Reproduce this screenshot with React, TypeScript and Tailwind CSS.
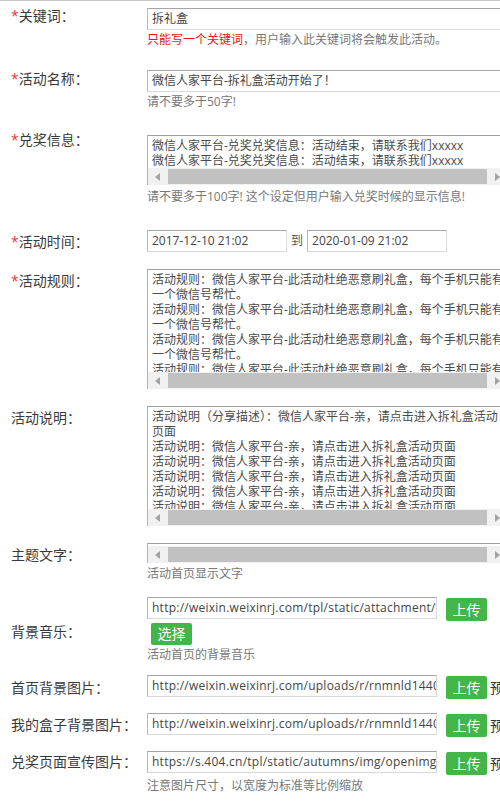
import React from "react";

function Label({ text, req, cls }: { text: string; req?: boolean; cls: string }) {
  return (
    <div className={`w-[147px] shrink-0 pl-[11px] text-[14px] leading-[16px] text-[#3a3a3a] whitespace-nowrap ${cls}`}>
      {req && <span className="text-[#e4393c]">*</span>}
      {text}
    </div>
  );
}

function TextInput({ value, w, url }: { value: string; w: string; url?: boolean }) {
  return (
    <div
      className={`h-[22px] ${w} shrink-0 border border-[#d9d9d9] border-t-[#a5a5a5] border-l-[#b9b9b9] bg-white px-[4px] text-[12px] leading-[20px] text-[#444] whitespace-nowrap overflow-hidden ${url ? "tracking-[0.25px]" : ""}`}
    >
      {value}
    </div>
  );
}

function Arrow({ dir }: { dir: "l" | "r" }) {
  return (
    <svg width="5" height="8" viewBox="0 0 5 8">
      {dir === "l" ? <path d="M5 0 L0 4 L5 8 Z" fill="#a3a3a3" /> : <path d="M0 0 L5 4 L0 8 Z" fill="#a3a3a3" />}
    </svg>
  );
}

function HScroll() {
  return (
    <div className="flex h-[17px] bg-[#f1f1f1]">
      <div className="w-[18px] h-[17px] flex items-center justify-center">
        <Arrow dir="l" />
      </div>
      <div className="ml-[2px] mt-[1px] w-[319px] h-[15px] bg-[#c1c1c1]" />
      <div className="ml-[2px] w-[17px] h-[17px] flex items-center justify-center">
        <Arrow dir="r" />
      </div>
    </div>
  );
}

function Area({ lines, h }: { lines: string[]; h: string }) {
  return (
    <div className="w-[360px] border-t border-l border-t-[#a0a0a0] border-l-[#b4b4b4] bg-white">
      <div className={`${h} overflow-hidden px-[4px] pt-[2px] text-[12px] leading-[15px] text-[#4a4a4a] whitespace-pre`}>
        {lines.join("\n")}
      </div>
      <HScroll />
    </div>
  );
}

function Hint({ children, cls }: { children: React.ReactNode; cls: string }) {
  return <div className={`${cls} text-[12px] leading-[16px] text-[#777] whitespace-nowrap`}>{children}</div>;
}

function UploadBtn() {
  return (
    <div className="ml-[9px] mt-[1px] w-[41px] h-[23px] shrink-0 rounded-[2px] bg-[#44b549] text-center text-[14px] leading-[23px] text-white">
      上传
    </div>
  );
}

function Preview() {
  return <div className="ml-[3px] mt-[1px] text-[14px] leading-[24px] text-[#333] whitespace-nowrap">预览</div>;
}

export default function App() {
  const rule = "活动规则：微信人家平台-此活动杜绝恶意刷礼盒，每个手机只能有";
  const rule2 = "一个微信号帮忙。";
  const desc = "活动说明：微信人家平台-亲，请点击进入拆礼盒活动页面";
  return (
    <div className="w-[500px] h-[801px] overflow-hidden bg-white border-t border-[#c9c9c9] pt-[7px] font-['Open_Sans','Noto_Sans_CJK_SC',sans-serif]">
      {/* 关键词 */}
      <div className="flex h-[62px]">
        <Label req text="关键词：" cls="mt-[0px]" />
        <div className="flex flex-col">
          <TextInput value="拆礼盒" w="w-[400px]" />
          <Hint cls="mt-[2px]">
            <span className="text-[#ee1111]">只能写一个关键词</span>，用户输入此关键词将会触发此活动。
          </Hint>
        </div>
      </div>
      {/* 活动名称 */}
      <div className="flex h-[65px]">
        <Label req text="活动名称：" cls="mt-[1px]" />
        <div className="flex flex-col">
          <TextInput value="微信人家平台-拆礼盒活动开始了！" w="w-[400px]" />
          <Hint cls="mt-[2px]">请不要多于50字!</Hint>
        </div>
      </div>
      {/* 兑奖信息 */}
      <div className="flex h-[95px]">
        <Label req text="兑奖信息：" cls="-mt-[3px]" />
        <div className="flex flex-col">
          <Area
            h="h-[32px]"
            lines={[
              "微信人家平台-兑奖兑奖信息：活动结束，请联系我们xxxxx",
              "微信人家平台-兑奖兑奖信息：活动结束，请联系我们xxxxx",
            ]}
          />
          <Hint cls="mt-[4px]">请不要多于100字! 这个设定但用户输入兑奖时候的显示信息!</Hint>
        </div>
      </div>
      {/* 活动时间 */}
      <div className="flex h-[39px]">
        <Label req text="活动时间：" cls="mt-[4px]" />
        <div className="flex">
          <TextInput value="2017-12-10 21:02" w="w-[140px]" />
          <div className="ml-[4px] mr-[4px] text-[12px] leading-[22px] text-[#555]">到</div>
          <TextInput value="2020-01-09 21:02" w="w-[140px]" />
        </div>
      </div>
      {/* 活动规则 */}
      <div className="flex h-[137px]">
        <Label req text="活动规则：" cls="mt-[4px]" />
        <div className="flex flex-col">
          <Area h="h-[102px]" lines={[rule, rule2, rule, rule2, rule, rule2, rule]} />
        </div>
      </div>
      {/* 活动说明 */}
      <div className="flex h-[137px]">
        <Label text="活动说明：" cls="mt-[4px]" />
        <div className="flex flex-col">
          <Area
            h="h-[102px]"
            lines={["活动说明（分享描述）：微信人家平台-亲，请点击进入拆礼盒活动", "页面", desc, desc, desc, desc, desc]}
          />
        </div>
      </div>
      {/* 主题文字 */}
      <div className="flex h-[54px]">
        <Label text="主题文字：" cls="mt-[4px]" />
        <div className="flex flex-col">
          <div className="w-[360px] border-t border-l border-t-[#a0a0a0] border-l-[#b4b4b4] bg-white">
            <div className="h-[2px]" />
            <HScroll />
          </div>
          <Hint cls="mt-[3px]">活动首页显示文字</Hint>
        </div>
      </div>
      {/* 背景音乐 */}
      <div className="flex h-[78px]">
        <Label text="背景音乐：" cls="mt-[27px]" />
        <div className="flex flex-col">
          <div className="flex">
            <TextInput url value="http://weixin.weixinrj.com/tpl/static/attachment/music/default/1.mp3" w="w-[290px]" />
            <UploadBtn />
          </div>
          <div className="ml-[4px] mt-[2px] w-[41px] h-[22px] rounded-[2px] bg-[#44b549] text-center text-[14px] leading-[22px] text-white">
            选择
          </div>
          <Hint cls="mt-[2px]">活动首页的背景音乐</Hint>
        </div>
      </div>
      {/* 首页背景图片 */}
      <div className="flex h-[38px]">
        <Label text="首页背景图片：" cls="mt-[5px]" />
        <div className="flex">
          <TextInput url value="http://weixin.weixinrj.com/uploads/r/rnmnld1440/4/8/a/5/thumb_5a2d.jpg" w="w-[290px]" />
          <UploadBtn />
          <Preview />
        </div>
      </div>
      {/* 我的盒子背景图片 */}
      <div className="flex h-[38px]">
        <Label text="我的盒子背景图片：" cls="mt-[4px]" />
        <div className="flex">
          <TextInput url value="http://weixin.weixinrj.com/uploads/r/rnmnld1440/0/2/b/3/thumb_5a2d.jpg" w="w-[290px]" />
          <UploadBtn />
          <Preview />
        </div>
      </div>
      {/* 兑奖页面宣传图片 */}
      <div className="flex">
        <Label text="兑奖页面宣传图片：" cls="mt-[3px]" />
        <div className="flex flex-col">
          <div className="flex">
            <TextInput url value="https://s.404.cn/tpl/static/autumns/img/openimg.jpg" w="w-[290px]" />
            <UploadBtn />
            <Preview />
          </div>
          <Hint cls="mt-[2px]">注意图片尺寸，以宽度为标准等比例缩放</Hint>
        </div>
      </div>
    </div>
  );
}
